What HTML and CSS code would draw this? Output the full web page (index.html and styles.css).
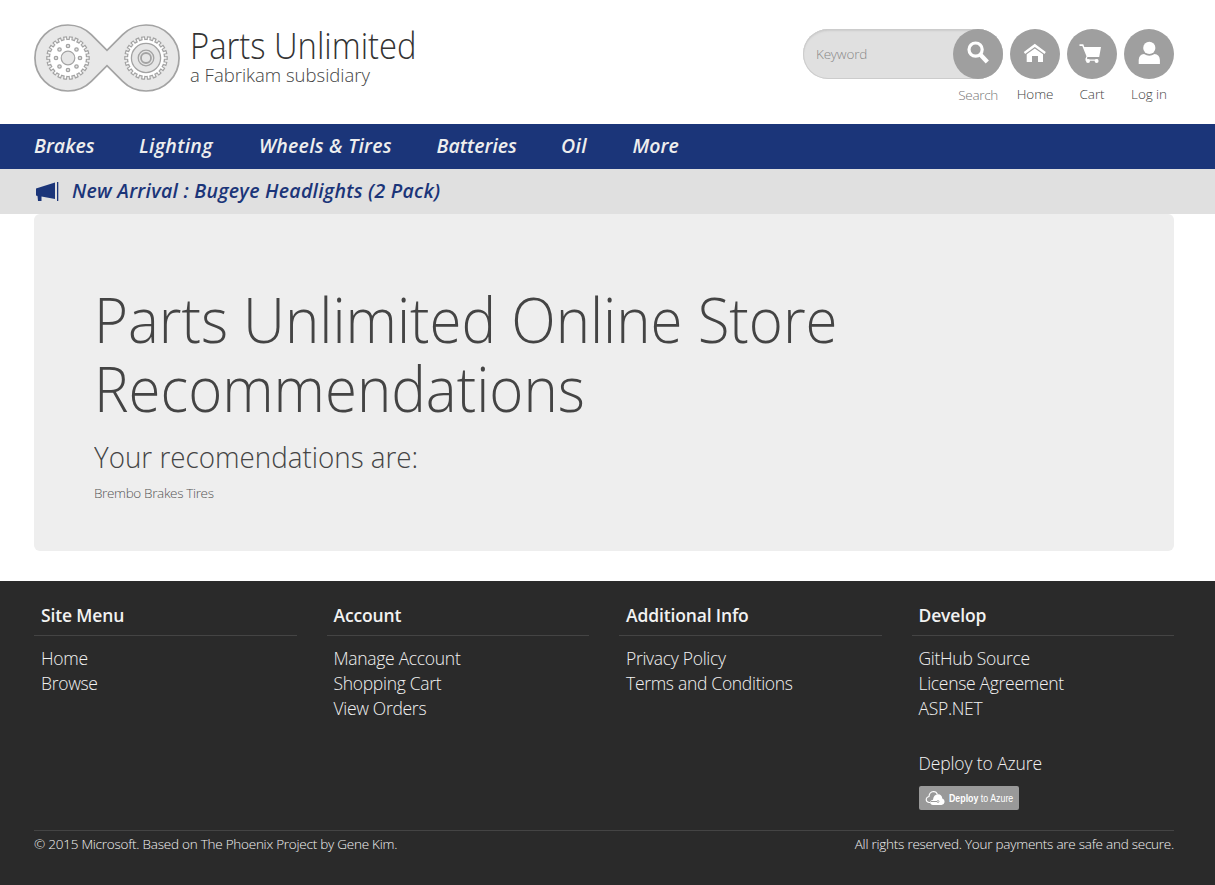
FILE: index.html
```html
<!DOCTYPE html>
<html lang="en">
<head>
<meta charset="utf-8">
<title>Parts Unlimited</title>
<link rel="stylesheet" href="styles.css">
</head>
<body>
<header class="header">
  <a class="brand">
    <svg class="logo" width="146" height="68" viewBox="34 24 146 68" fill="none" stroke="#a3a3a3">
      <path d="M91.3 34.7 107 50.4 122.7 34.7A33 33 0 1 1 122.7 81.3L107 65.6 91.3 81.3A33 33 0 1 1 91.3 34.7Z" fill="#e8e8e8" stroke-width="1.7"/>
      <circle cx="68" cy="58" r="19.6" stroke-width="4.4" pathLength="220" stroke-dasharray="6.8 3.2" stroke-dashoffset="3.4"/>
      <circle cx="68" cy="58" r="19.2" fill="#a3a3a3" stroke="none"/>
      <circle cx="68" cy="58" r="18.6" stroke="#fff" stroke-width="4" pathLength="220" stroke-dasharray="3 7" stroke-dashoffset="1.5"/>
      <circle cx="68" cy="58" r="17.9" fill="#fff" stroke="none"/>
      <circle cx="68" cy="58" r="6.8" fill="#e6e6e6" stroke-width="1.2"/>
      <g stroke-width="1.3" fill="#e6e6e6">
        <circle cx="68" cy="46" r="1.7"/><circle cx="68" cy="70" r="1.7"/><circle cx="56" cy="58" r="1.7"/><circle cx="80" cy="58" r="1.7"/>
        <circle cx="59.5" cy="49.5" r="1.7"/><circle cx="76.5" cy="49.5" r="1.7"/><circle cx="59.5" cy="66.5" r="1.7"/><circle cx="76.5" cy="66.5" r="1.7"/>
      </g>
      <circle cx="146" cy="58" r="19.6" stroke-width="4.4" pathLength="220" stroke-dasharray="6.8 3.2" stroke-dashoffset="3.4"/>
      <circle cx="146" cy="58" r="19.2" fill="#a3a3a3" stroke="none"/>
      <circle cx="146" cy="58" r="18.6" stroke="#fff" stroke-width="4" pathLength="220" stroke-dasharray="3 7" stroke-dashoffset="1.5"/>
      <circle cx="146" cy="58" r="17.9" fill="#fff" stroke="none"/>
      <circle cx="146" cy="58" r="14.6" fill="#e6e6e6" stroke-width="1.3"/>
      <circle cx="146" cy="58" r="7.8" stroke-width="1.3"/>
      <circle cx="146" cy="58" r="5" stroke-width="1.8"/>
    </svg>
    <span class="brand-text">
      <span class="brand-name">Parts Unlimited</span>
      <span class="brand-sub">a Fabrikam subsidiary</span>
    </span>
  </a>
  <div class="tools">
    <div class="search">
      <div class="search-box">
        <span class="keyword">Keyword</span>
        <span class="round"><svg width="50" height="50" viewBox="0 0 50 50"><circle cx="22.6" cy="20.6" r="6.6" fill="none" stroke="#fff" stroke-width="3.2"/><path d="M27.5 25.8 34.3 33" stroke="#fff" stroke-width="4.4"/></svg></span>
      </div>
      <span class="tool-label search-label">Search</span>
    </div>
    <div class="tool">
      <span class="round"><svg width="50" height="50" viewBox="0 0 50 50" fill="#fff"><path d="M24.8 14.8 35.8 22.9 34.5 25 24.8 17.9 15.1 25 13.8 22.9Z"/><path d="M24.8 19.4 33 25.3V33H28V27H22V33H16.700V25.300Z"/></svg></span>
      <span class="tool-label">Home</span>
    </div>
    <div class="tool">
      <span class="round"><svg width="50" height="50" viewBox="0 0 50 50" fill="#fff"><path d="M12.500 15.300H16.300L17.300 18H34L32.200 28H20.300L20 30.500H31V31.700H18.500V29.500L19.500 27.200 15.300 17H12.500Z"/><circle cx="21" cy="32" r="2"/><circle cx="29.600" cy="32" r="2"/></svg></span>
      <span class="tool-label">Cart</span>
    </div>
    <div class="tool">
      <span class="round"><svg width="50" height="50" viewBox="0 0 50 50" fill="#fff"><circle cx="25.300" cy="18.900" r="6.100"/><path d="M14.700 35V31Q15 25.500 20 25Q25.300 28.500 30.500 25Q35.600 25.500 35.900 31V35Z"/></svg></span>
      <span class="tool-label">Log in</span>
    </div>
  </div>
</header>
<nav class="nav">
  <a class="brakes">Brakes</a><a class="lighting">Lighting</a><a class="wheels">Wheels &amp; Tires</a><a class="batteries">Batteries</a><a class="oil">Oil</a><a>More</a>
</nav>
<div class="news">
  <svg width="24" height="22" viewBox="0 0 24 22" fill="#1b3579"><path d="M1 7.500 20 1.500V18L6.500 15.500V20H3L2.500 15 1 14.500Z"/><path d="M22 1H23.300V20H22Z"/></svg>
  <a class="news-text">New Arrival : Bugeye Headlights (2 Pack)</a>
</div>
<main class="hero">
  <h1>Parts Unlimited Online Store<br>Recommendations</h1>
  <h2>Your recomendations are:</h2>
  <p>Brembo Brakes Tires</p>
</main>
<footer class="footer">
  <div class="cols">
    <section><h3>Site Menu</h3><ul><li>Home</li><li>Browse</li></ul></section>
    <section><h3>Account</h3><ul><li>Manage Account</li><li>Shopping Cart</li><li>View Orders</li></ul></section>
    <section><h3>Additional Info</h3><ul><li>Privacy Policy</li><li>Terms and Conditions</li></ul></section>
    <section><h3>Develop</h3><ul><li>GitHub Source</li><li>License Agreement</li><li>ASP.NET</li><li class="deploy">Deploy to Azure</li></ul>
      <a class="azure">
        <svg width="20" height="16" viewBox="0 0 20 16"><path d="M5 12.500H4Q1 12 1.200 9 1.600 6.800 4 6.500 4.200 2 8.500 1.500 11.500 1.500 12.500 4.500" fill="none" stroke="#fff" stroke-width="1.100"/><path d="M8 15Q5 14.500 5.200 12 5.500 10 8 9.800 8.500 4.500 13 4.300 17 4.500 17.300 8.500 19.800 9.300 19.600 12 19.200 14.700 16.500 15Z" fill="#fff"/><path d="M6 11.500H12" stroke="#999" stroke-width="1"/><circle cx="13" cy="11.500" r="1" fill="none" stroke="#999" stroke-width=".8"/></svg>
        <span class="azure-text"><b>Deploy</b> to Azure</span>
      </a>
    </section>
  </div>
  <div class="legal"><span class="copy">© 2015 Microsoft. Based on The Phoenix Project by Gene Kim.</span><span class="rights">All rights reserved. Your payments are safe and secure.</span></div>
</footer>
</body>
</html>
```
FILE: styles.css
```css
* { box-sizing: border-box; }
body { margin: 0; background: #fff; color: #444; font-family: "Open Sans", "Noto Sans", sans-serif; font-weight: 300; }
h1, h2, h3, p, ul { margin: 0; padding: 0; font-weight: 300; }
ul { list-style: none; }
svg { display: block; flex: none; }
span, a, li, h1, h2, h3 { white-space: nowrap; }

.header { height: 124px; padding: 24px 41px 0 34px; display: flex; justify-content: space-between; }
.brand { display: flex; gap: 10px; }
.brand-text { display: flex; flex-direction: column; }
.brand-name { font-size: 36px; line-height: 40px; margin-top: 2px; transform: scaleX(.91); transform-origin: left; color: #333; }
.brand-sub { font-size: 18.5px; line-height: 20px; margin-top: -1px; }
.tools { display: flex; gap: 7px; padding-top: 5px; }
.search { width: 200px; display: flex; flex-direction: column; }
.search-box { height: 50px; border-radius: 25px; background: #e0e0e0; box-shadow: inset 0 0 0 1px #ccc, inset 0 2px 2px #ccc; display: flex; justify-content: space-between; align-items: center; padding-left: 13px; }
.keyword { font-size: 13.5px; letter-spacing: -0.2px; color: #888; }
.round { width: 50px; height: 50px; border-radius: 50%; background: #9f9f9f; }
.tool { width: 50px; display: flex; flex-direction: column; align-items: center; }
.tool-label { font-size: 13.5px; line-height: 20px; margin-top: 5px; letter-spacing: -0.1px; }
.search-label { align-self: flex-end; margin: 6px 5px 0 0; letter-spacing: -0.3px; color: #777; }

.nav { height: 45px; background: #1b3579; padding-left: 34px; display: flex; font-size: 19.5px; line-height: 44px; font-weight: 700; font-style: italic; letter-spacing: -0.25px; color: #eee; }
.nav { font-weight: 650; letter-spacing: 0; }
.brakes { width: 105px; }
.lighting { width: 120px; letter-spacing: 0.3px; }
.wheels { width: 177.5px; letter-spacing: 0.25px; }
.batteries { width: 124.5px; }
.oil { width: 71.5px; letter-spacing: 0.4px; }
.news { height: 45px; background: #e0e0e0; padding-left: 35px; display: flex; align-items: center; gap: 13px; color: #1b3579; }
.news-text { font-size: 19.5px; line-height: 43px; margin-top: -2px; font-weight: 550; font-style: italic; letter-spacing: 0.26px; }

.hero { width: 1140px; height: 337px; margin-left: 34px; border-radius: 6px; background: #eee; padding: 71px 60px 0; }
.hero h1 { font-size: 62px; line-height: 69px; transform: scaleX(.938); transform-origin: left; color: #444; }
.hero h2 { font-size: 30px; line-height: 33px; margin-top: 17px; transform: scaleX(.926); transform-origin: left; }
.hero p { font-size: 13.5px; line-height: 20px; margin-top: 10px; letter-spacing: -0.35px; color: #555; }

.footer { margin-top: 30px; height: 304px; background: #2a2a2a; color: #f2f2f2; padding: 17px 41px 0 34px; }
.cols { display: grid; grid-template-columns: repeat(4, 262.5px); column-gap: 30px; height: 232px; }
.footer h3 { font-size: 17.5px; line-height: 34px; height: 38px; padding-left: 7px; font-weight: 600; letter-spacing: -0.15px; border-bottom: 1px solid #444; }
.footer ul { padding: 10px 0 0 7px; font-size: 17.5px; line-height: 25px; letter-spacing: -0.3px; }
.deploy { margin-top: 30px; letter-spacing: -0.12px; }
.azure { margin: 10px 0 0 7px; width: 100px; height: 24px; border-radius: 2px; background: #999; color: #fff; display: flex; align-items: center; gap: 4px; padding-left: 6px; font: 400 10.5px "Liberation Sans", sans-serif; }
.azure-text { transform: scaleX(.84); transform-origin: left; }
.legal { border-top: 1px solid #444; display: flex; justify-content: space-between; font-size: 13.5px; line-height: 27px; letter-spacing: -0.24px; }
```
